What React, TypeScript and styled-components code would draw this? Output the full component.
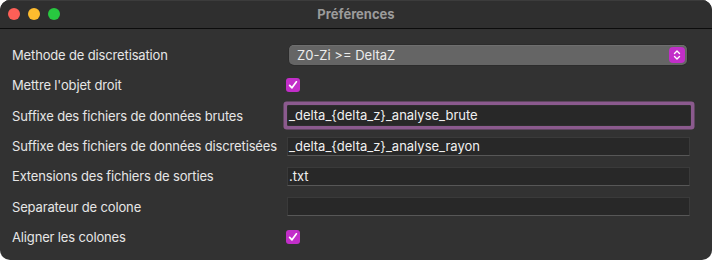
import React, { FC } from "react";
import styled, { createGlobalStyle } from "styled-components";

const GlobalStyle = createGlobalStyle`
  html, body {
    margin: 0;
    padding: 0;
    background: #ffffff;
  }
  body {
    font-family: Inter, "Liberation Sans", sans-serif;
    -webkit-font-smoothing: antialiased;
  }
`;

const Window = styled.div`
  width: 712px;
  height: 260px;
  border-radius: 10px;
  overflow: hidden;
  background-color: #323232;
  display: flex;
  flex-direction: column;
`;

const TitleBar = styled.div`
  height: 28px;
  flex-shrink: 0;
  background-color: #2f2f2f;
  border-bottom: 1px solid #0c0c0c;
  box-shadow: inset 0 1px 0 #3c3c3c;
  display: flex;
  align-items: center;
  position: relative;
  padding-left: 8px;
  gap: 8px;
`;

const Light = styled.span<{ color: string }>`
  width: 12px;
  height: 12px;
  border-radius: 50%;
  background-color: ${(p) => p.color};
`;

const Title = styled.div`
  position: absolute;
  left: 0;
  right: 0;
  top: 0;
  line-height: 28px;
  text-align: center;
  font-size: 13px;
  font-weight: 700;
  color: #9b9b9b;
  pointer-events: none;
`;

const Form = styled.div`
  display: grid;
  grid-template-columns: 275px 1fr;
  grid-auto-rows: 30.33px;
  padding: 11px 22px 0 12px;
  align-items: center;
`;

const Label = styled.div`
  font-size: 13px;
  letter-spacing: -0.15px;
  color: #e6e6e6;
  white-space: nowrap;
`;

const Select = styled.div`
  margin-left: 2px;
  margin-right: 3px;
  height: 20px;
  border-radius: 5px;
  background-color: #656565;
  box-shadow: inset 0 0.5px 0 #7a7a7a, 0 0 0 0.5px #262626;
  display: flex;
  align-items: center;
  justify-content: space-between;
  padding: 0 2px 0 8px;
  font-size: 13px;
  color: #ececec;
`;

const Stepper = styled.span`
  width: 16px;
  height: 16px;
  border-radius: 4px;
  background-color: #c22ec9;
  display: flex;
  align-items: center;
  justify-content: center;
`;

const Check = styled.span`
  margin-left: -1px;
  width: 14px;
  height: 14px;
  border-radius: 3px;
  background-color: #c22ec9;
  display: flex;
  align-items: center;
  justify-content: center;
`;

const Field = styled.div<{ focused?: boolean }>`
  height: 19px;
  box-sizing: border-box;
  background-color: #282828;
  border: 1px solid #3a3a3a;
  border-bottom-color: #575757;
  font-size: 13px;
  color: #f0f0f0;
  padding-left: 1px;
  line-height: 17px;
  white-space: nowrap;
  ${(p) =>
    p.focused &&
    `
    height: 21px;
    margin-right: -1px;
    border-color: #2e2e2e;
    border-radius: 1px;
    box-shadow: 0 0 0 3.5px #8b5a8e;
    line-height: 19px;
  `}
`;

const CheckIcon: FC = () => (
  <svg width="10" height="10" viewBox="0 0 10 10">
    <path
      d="M1.6 5.3 L4 7.8 L8.4 1.8"
      fill="none"
      stroke="#ffffff"
      strokeWidth="1.7"
      strokeLinecap="round"
      strokeLinejoin="round"
    />
  </svg>
);

const StepperIcon: FC = () => (
  <svg width="10" height="12" viewBox="0 0 10 12">
    <path
      d="M2.5 4.5 L5 2 L7.5 4.5 M2.5 7.5 L5 10 L7.5 7.5"
      fill="none"
      stroke="#ffffff"
      strokeWidth="1.4"
      strokeLinecap="round"
      strokeLinejoin="round"
    />
  </svg>
);

const Checkbox: FC = () => (
  <div>
    <Check>
      <CheckIcon />
    </Check>
  </div>
);

export default function App() {
  return (
    <>
      <GlobalStyle />
      <Window>
        <TitleBar>
          <Light color="#fe5f57" />
          <Light color="#febc2e" />
          <Light color="#28c840" />
          <Title>Préférences</Title>
        </TitleBar>
        <Form>
          <Label>Methode de discretisation</Label>
          <Select>
            <span>Z0-Zi &gt;= DeltaZ</span>
            <Stepper>
              <StepperIcon />
            </Stepper>
          </Select>

          <Label>Mettre l'objet droit</Label>
          <Checkbox />

          <Label>Suffixe des fichiers de données brutes</Label>
          <Field focused>_delta_{"{delta_z}"}_analyse_brute</Field>

          <Label>Suffixe des fichiers de données discretisées</Label>
          <Field>_delta_{"{delta_z}"}_analyse_rayon</Field>

          <Label>Extensions des fichiers de sorties</Label>
          <Field>.txt</Field>

          <Label>Separateur de colone</Label>
          <Field />

          <Label>Aligner les colones</Label>
          <Checkbox />
        </Form>
      </Window>
    </>
  );
}
